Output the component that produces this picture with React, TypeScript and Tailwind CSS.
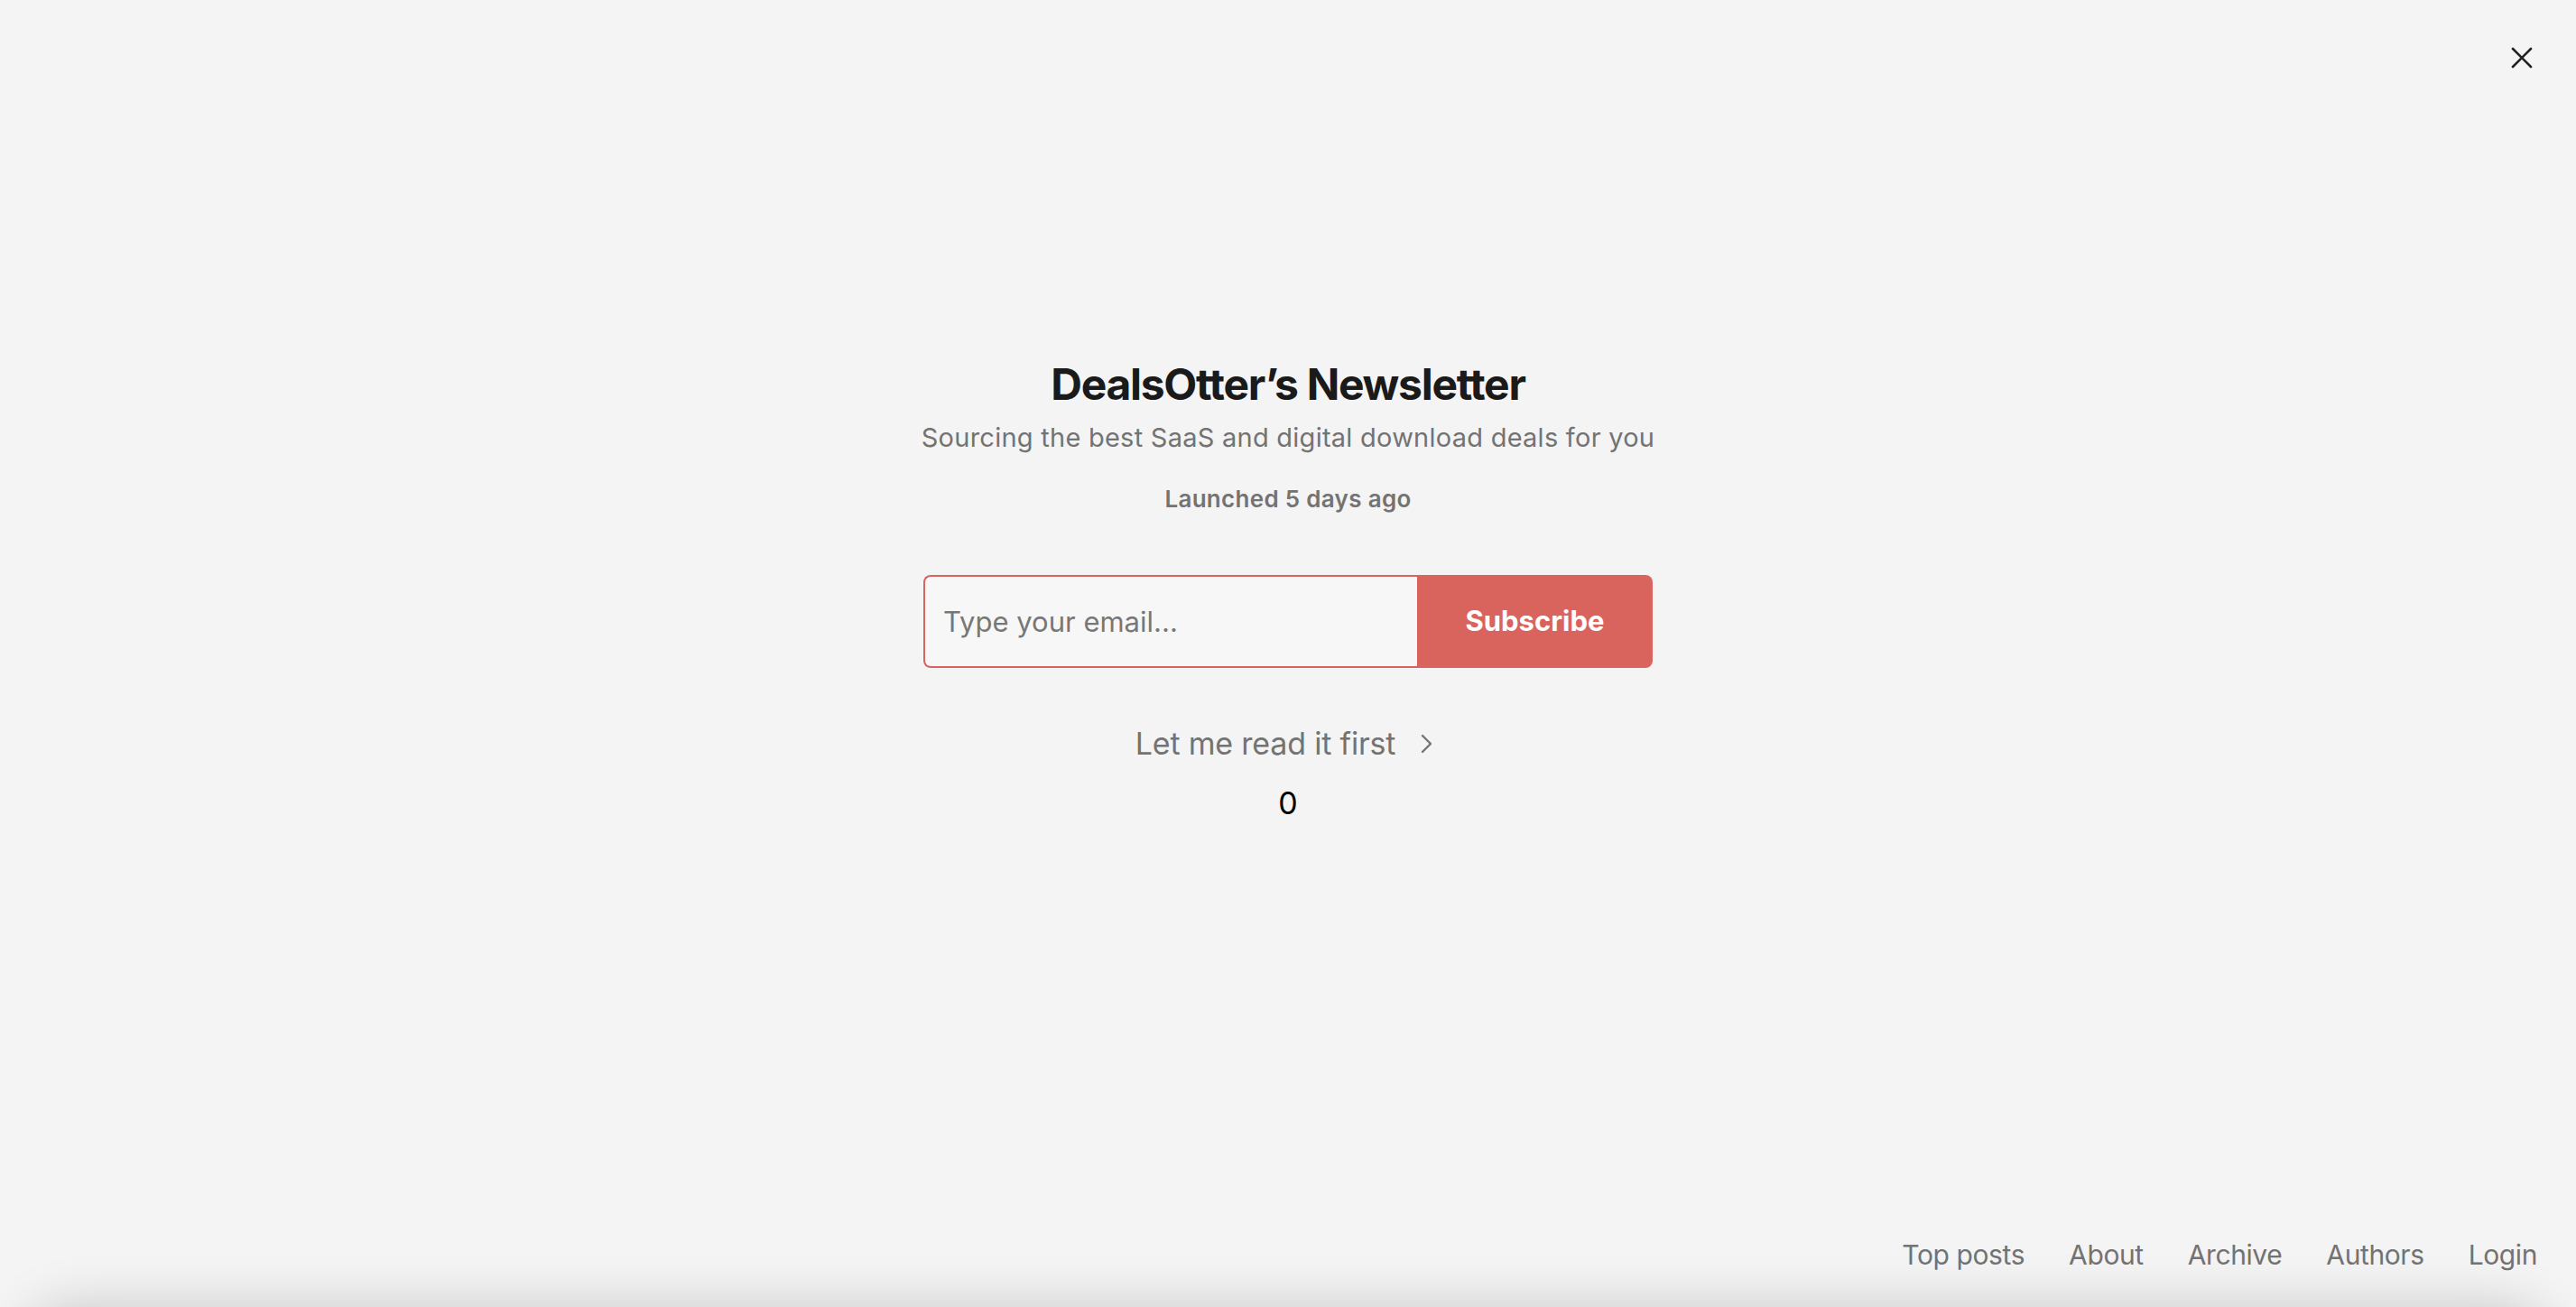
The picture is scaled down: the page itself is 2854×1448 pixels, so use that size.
import React from "react";

export default function App() {
  const font = { fontFamily: "Inter, 'Noto Sans', sans-serif" };
  return (
    <div
      className="relative h-[1448px] w-full overflow-hidden bg-[#f4f4f4] flex flex-col"
      style={font}
    >
      <button className="absolute top-[50px] right-[46px] w-[28px] h-[28px] flex items-center justify-center">
        <svg width="24" height="24" viewBox="0 0 24 24" fill="none">
          <path d="M2 2 L22 22 M22 2 L2 22" stroke="#222" strokeWidth="2.6" strokeLinecap="round" />
        </svg>
      </button>

      <main className="flex-1 flex flex-col items-center pt-[398px]">
        <h1 className="text-[48px] leading-[56px] font-bold text-[#1a1a1a] tracking-[-1.3px]">
          DealsOtter’s Newsletter
        </h1>
        <p className="mt-[13px] text-[29px] leading-[36px] text-[#737373] tracking-[0.25px]">
          Sourcing the best SaaS and digital download deals for you
        </p>
        <p className="mt-[34px] text-[26px] leading-[32px] font-semibold text-[#737373] tracking-[0.3px]">
          Launched 5 days ago
        </p>
        <form className="mt-[68px] flex w-[808px] h-[103px]" onSubmit={(e) => e.preventDefault()}>
          <input
            type="email"
            placeholder="Type your email..."
            className="w-[547px] h-full rounded-l-[8px] border-2 border-r-0 border-[#d9645e] bg-[#f7f7f7] px-[20px] text-[31px] text-[#333] placeholder:text-[#777] outline-none"
          />
          <button
            type="submit"
            className="flex-1 h-full rounded-r-[8px] bg-[#d9645e] text-white text-[31px] font-bold"
          >
            Subscribe
          </button>
        </form>
        <button className="mt-[64px] mr-[8px] flex items-center gap-[28px] text-[34px] leading-[40px] text-[#737373] tracking-[-0.2px]">
          <span>Let me read it first</span>
          <svg width="14" height="22" viewBox="0 0 14 22" fill="none">
            <path d="M2 2 L11 11 L2 20" stroke="#737373" strokeWidth="2.4" strokeLinecap="round" strokeLinejoin="round" />
          </svg>
        </button>
        <div className="mt-[26px] text-[34px] leading-[40px] text-black">0</div>
      </main>

      <footer className="flex justify-end items-center gap-[49px] pr-[43px] pb-[38px] text-[30px] leading-[40px] text-[#737373] tracking-[-0.4px]">
        <a>Top posts</a>
        <a>About</a>
        <a>Archive</a>
        <a>Authors</a>
        <a>Login</a>
      </footer>

      <div className="absolute top-[1448px] left-[24px] right-[24px] h-[200px] rounded-[60px] bg-white shadow-[0_0_60px_rgba(0,0,0,0.18)]" />
    </div>
  );
}
